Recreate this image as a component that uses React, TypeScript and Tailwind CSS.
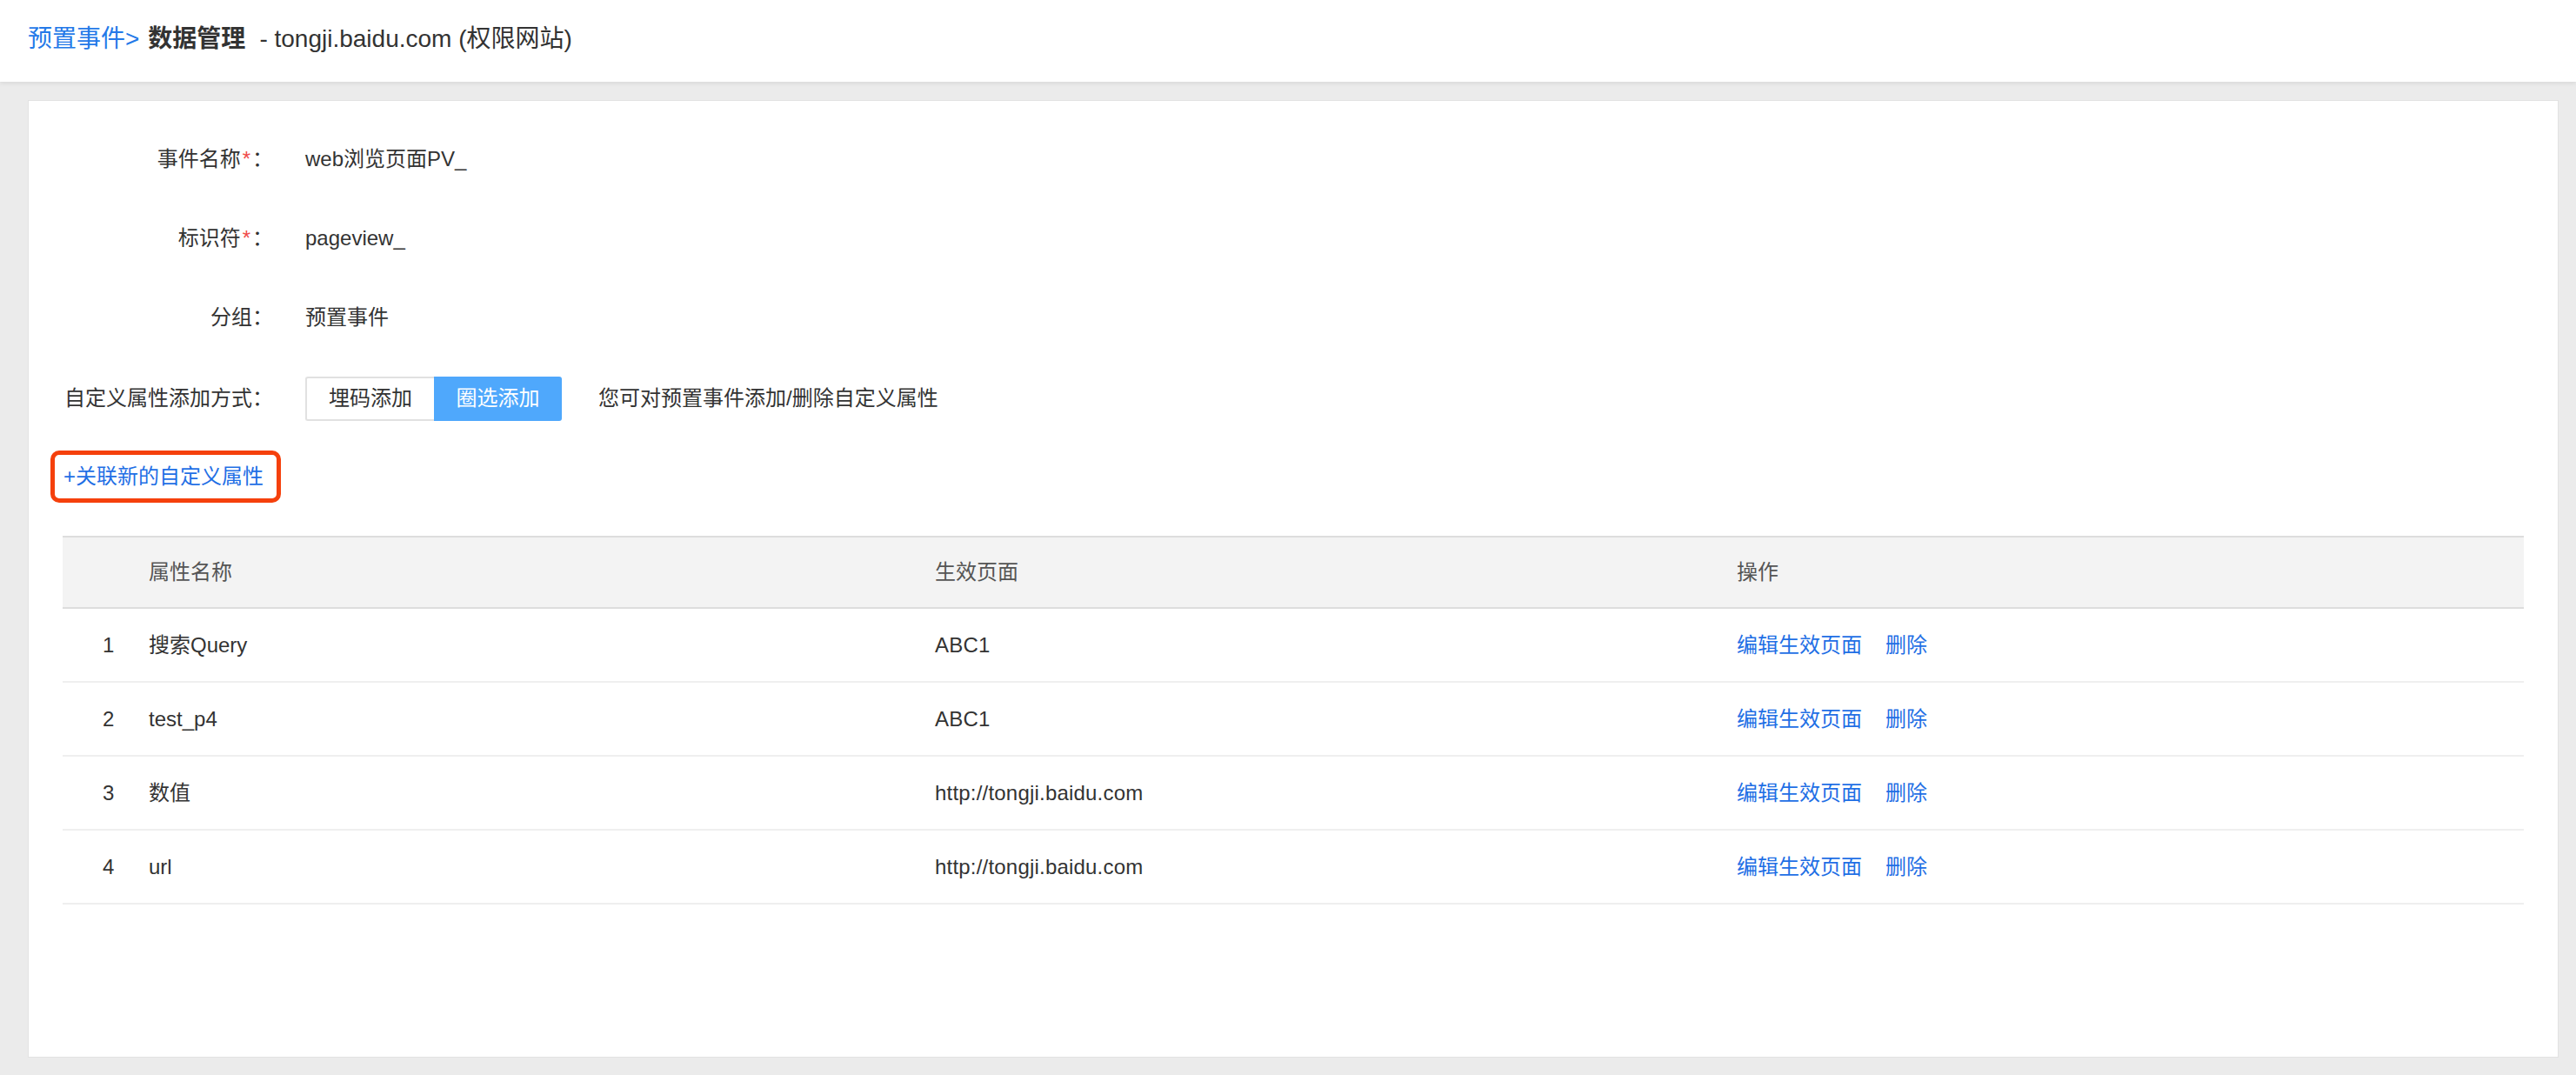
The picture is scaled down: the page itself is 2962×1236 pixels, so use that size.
const font = "font-['Liberation_Sans','Noto_Sans_CJK_SC',sans-serif]";

type Attr = { id: number; name: string; page: string };

const attrs: Attr[] = [
  { id: 1, name: "搜索Query", page: "ABC1" },
  { id: 2, name: "test_p4", page: "ABC1" },
  { id: 3, name: "数值", page: "http://tongji.baidu.com" },
  { id: 4, name: "url", page: "http://tongji.baidu.com" },
];

function FormRow({ label, required, children }: { label: string; required?: boolean; children: React.ReactNode }) {
  return (
    <div className="flex h-[91px] items-center">
      <div className="w-[242px] text-right text-[#333]">
        {label}
        {required && <span className="mx-[2px] text-[#f04b4b]">*</span>}：
      </div>
      <div className="ml-[37px] flex items-center text-[#333]">{children}</div>
    </div>
  );
}

export default function App() {
  return (
    <div className={`min-h-[1236px] bg-[#ebebeb] text-[24px] ${font}`}>
      <header className="flex h-[94px] items-center bg-white pb-[4px] pl-[32px] text-[28px] text-[#333] shadow-[0_2px_5px_rgba(0,0,0,0.08)]">
        <span className="text-[#2479e8]">预置事件&gt;</span>
        <span className="ml-[10px] font-bold">数据管理</span>
        <span className="ml-[16px]">- tongji.baidu.com (权限网站)</span>
      </header>

      <main className="pl-[32px] pr-[20px] pt-[21px]">
        <section className="h-[1101px] border border-[#e2e2e2] bg-white px-[39px] pt-[21px]">
          <FormRow label="事件名称" required>web浏览页面PV_</FormRow>
          <FormRow label="标识符" required>pageview_</FormRow>
          <FormRow label="分组">预置事件</FormRow>

          <div className="flex h-[96px] items-center">
            <div className="w-[242px] text-right text-[#333]">自定义属性添加方式：</div>
            <div className="ml-[37px] flex h-[51px]">
              <button className="w-[148px] rounded-l-[3px] border-2 border-r-0 border-[#e1e1e1] bg-white text-[#333]">
                埋码添加
              </button>
              <button className="w-[147px] rounded-r-[3px] bg-[#4fa8fc] text-white">圈选添加</button>
            </div>
            <span className="ml-[42px] text-[#333]">您可对预置事件添加/删除自定义属性</span>
          </div>

          <div className="mt-[12px] -ml-[14px] flex h-[60px] w-[265px] items-center rounded-[10px] border-[5px] border-[#f5400c] pl-[10px] text-[#1f6fe5]">
            +关联新的自定义属性
          </div>

          <table className="mt-[38px] w-full border-collapse text-left">
            <thead>
              <tr className="h-[82px] border-y-2 border-[#dddddd] bg-[#f3f3f3] text-[#555]">
                <th className="w-[99px] font-normal"></th>
                <th className="w-[904px] font-normal">属性名称</th>
                <th className="w-[922px] font-normal">生效页面</th>
                <th className="font-normal">操作</th>
              </tr>
            </thead>
            <tbody>
              {attrs.map((a) => (
                <tr key={a.id} className="h-[85px] border-b-2 border-[#efefef] text-[#333]">
                  <td className="pl-[46px]">{a.id}</td>
                  <td>{a.name}</td>
                  <td className="tracking-[0.2px]">{a.page}</td>
                  <td className="text-[#1f6fe5]">
                    <span>编辑生效页面</span>
                    <span className="ml-[27px]">删除</span>
                  </td>
                </tr>
              ))}
            </tbody>
          </table>
        </section>
      </main>
    </div>
  );
}
